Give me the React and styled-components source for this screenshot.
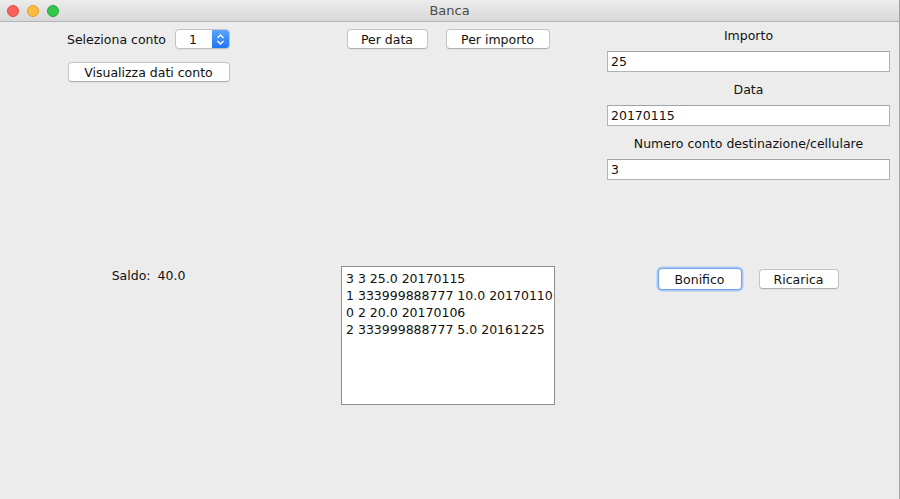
import styled, { createGlobalStyle } from "styled-components";

const Global = createGlobalStyle`
    html, body {
        margin: 0;
        padding: 0;
        background: #ececec;
    }
    * {
        box-sizing: border-box;
    }
`;

const movimenti = [
    "3 3 25.0 20170115",
    "1 333999888777 10.0 20170110",
    "0 2 20.0 20170106",
    "2 333999888777 5.0 20161225",
];

export default function App() {
    return (
        <>
            <Global />
            <Window>
                <TitleBar>
                    <Lights>
                        <Light color="#fc605c" edge="#de4a44" />
                        <Light color="#fdbc40" edge="#dc9d30" />
                        <Light color="#34c84a" edge="#25a537" />
                    </Lights>
                    <Title>Banca</Title>
                </TitleBar>
                <Body>
                    <Cell>
                        <Row top={7}>
                            <Label>Seleziona conto</Label>
                            <Combo>
                                <span>1</span>
                                <ComboArrow>
                                    <svg width="9" height="13" viewBox="0 0 9 13">
                                        <path d="M1.5 5 L4.5 2 L7.5 5" fill="none" stroke="#fff" strokeWidth="1.4" />
                                        <path d="M1.5 8 L4.5 11 L7.5 8" fill="none" stroke="#fff" strokeWidth="1.4" />
                                    </svg>
                                </ComboArrow>
                            </Combo>
                        </Row>
                        <Row top={13}>
                            <Button w={162}>Visualizza dati conto</Button>
                        </Row>
                    </Cell>
                    <Cell>
                        <Row top={7} gap={18}>
                            <Button w={81}>Per data</Button>
                            <Button w={104}>Per importo</Button>
                        </Row>
                    </Cell>
                    <FormCell>
                        <FieldLabel>Importo</FieldLabel>
                        <FieldSlot><Field>25</Field></FieldSlot>
                        <FieldLabel>Data</FieldLabel>
                        <FieldSlot><Field>20170115</Field></FieldSlot>
                        <FieldLabel>Numero conto destinazione/cellulare</FieldLabel>
                        <FieldSlot><Field>3</Field></FieldSlot>
                    </FormCell>
                    <Cell>
                        <Row top={5}>
                            <Saldo>
                                <span>Saldo:</span>
                                <span>40.0</span>
                            </Saldo>
                        </Row>
                    </Cell>
                    <Cell>
                        <Row top={6}>
                            <TextArea>
                                {movimenti.map((m) => (
                                    <div key={m}>{m}</div>
                                ))}
                            </TextArea>
                        </Row>
                    </Cell>
                    <Cell>
                        <Row top={8} gap={17}>
                            <Button w={84} focused>Bonifico</Button>
                            <Button w={80}>Ricarica</Button>
                        </Row>
                    </Cell>
                </Body>
            </Window>
        </>
    );
}

const Window = styled.div`
    width: 900px;
    height: 499px;
    display: flex;
    flex-direction: column;
    background: #ececec;
    border-right: 1px solid #a4a4a4;
    font-family: "DejaVu Sans", "Liberation Sans", sans-serif;
    font-size: 12.5px;
    color: #111;
    overflow: hidden;
`;

const TitleBar = styled.div`
    position: relative;
    height: 22px;
    flex-shrink: 0;
    display: flex;
    align-items: center;
    justify-content: center;
    background: linear-gradient(#ececec, #d8d8d8);
    border-bottom: 1px solid #b3b3b3;
    border-top-left-radius: 5px;
    border-top-right-radius: 5px;
`;

const Lights = styled.div`
    position: absolute;
    left: 7px;
    top: 5px;
    display: flex;
    gap: 8px;
`;

const Light = styled.span`
    width: 12px;
    height: 12px;
    border-radius: 50%;
    background: ${(p) => p.color};
    border: 0.5px solid ${(p) => p.edge};
`;

const Title = styled.div`
    font-size: 13px;
    color: #4b4b4b;
`;

const Body = styled.div`
    flex: 1;
    display: grid;
    grid-template-columns: 297px 302px 298px;
    grid-template-rows: 238px 239px;
`;

const Cell = styled.div`
    display: flex;
    flex-direction: column;
    align-items: center;
`;

const Row = styled.div`
    display: flex;
    align-items: center;
    justify-content: center;
    gap: ${(p) => p.gap ?? 9}px;
    margin-top: ${(p) => p.top}px;
`;

const Label = styled.span`
    white-space: nowrap;
`;

const Combo = styled.div`
    width: 55px;
    height: 20px;
    display: flex;
    align-items: stretch;
    background: #fff;
    border: 1px solid #c2c2c2;
    border-radius: 4px;
    overflow: hidden;
    box-shadow: 0 1px 0 rgba(0, 0, 0, 0.06);

    span {
        flex: 1;
        display: flex;
        align-items: center;
        justify-content: center;
        padding-right: 2px;
    }
`;

const ComboArrow = styled.div`
    width: 17px;
    display: flex;
    align-items: center;
    justify-content: center;
    background: linear-gradient(#5aa6fb, #1f74f4);
`;

const Button = styled.div`
    width: ${(p) => p.w}px;
    height: ${(p) => (p.focused ? 22 : 20)}px;
    display: flex;
    align-items: center;
    justify-content: center;
    background: #fff;
    border: 1px solid ${(p) => (p.focused ? "#6fa3ef" : "#c4c4c4")};
    border-bottom-color: ${(p) => (p.focused ? "#6fa3ef" : "#b0b0b0")};
    border-radius: 4px;
    box-shadow: ${(p) =>
        p.focused ? "0 0 0 1.5px #a9c8f6" : "0 1px 0 rgba(0, 0, 0, 0.04)"};
    white-space: nowrap;
`;

const FormCell = styled.div`
    display: flex;
    flex-direction: column;
    padding: 0 7px 0 8px;
`;

const FieldLabel = styled.div`
    height: 27px;
    display: flex;
    align-items: center;
    justify-content: center;
    white-space: nowrap;
`;

const FieldSlot = styled.div`
    height: 27px;
    display: flex;
    align-items: flex-start;
    padding-top: 2px;
`;

const Field = styled.div`
    width: 100%;
    height: 21px;
    display: flex;
    align-items: center;
    padding-left: 3px;
    background: #fff;
    border: 1px solid #b2b2b2;
    border-top-color: #a3a3a3;
`;

const Saldo = styled.div`
    display: flex;
    gap: 7px;
    height: 20px;
    align-items: center;
`;

const TextArea = styled.div`
    width: 214px;
    height: 139px;
    padding: 3px 0 0 4px;
    background: #fff;
    border: 1px solid #8e8e8e;
    line-height: 17px;
    white-space: nowrap;
    overflow: hidden;
`;
